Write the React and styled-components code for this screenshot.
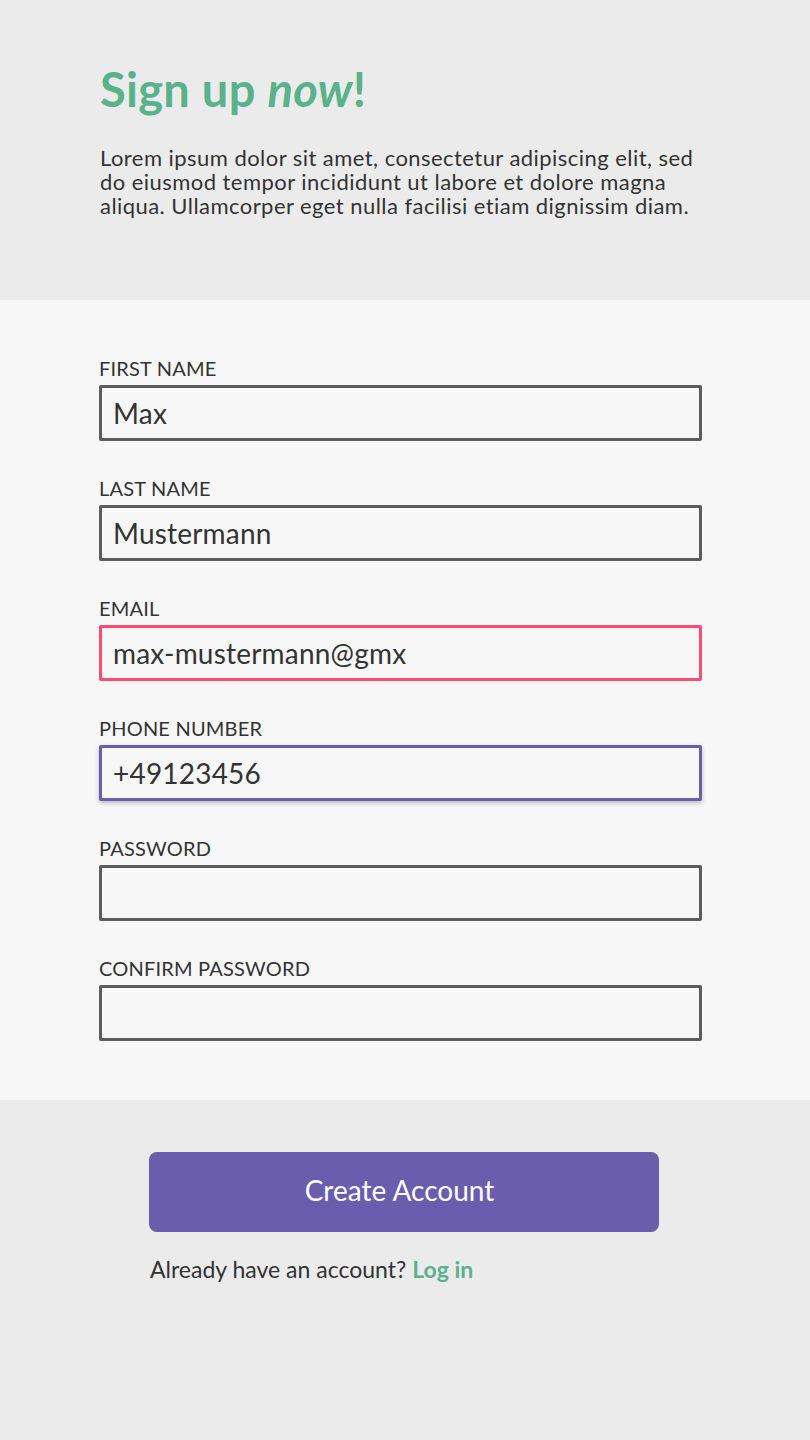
import React from "react";
import styled, { createGlobalStyle } from "styled-components";

const Global = createGlobalStyle`
  html, body { margin: 0; padding: 0; background: #ebebeb; }
  body { font-family: "Source Sans Pro", Lato, "Noto Sans", sans-serif; color: #333; }
  * { box-sizing: border-box; }
`;

const Page = styled.div`
  display: flex;
  flex-direction: column;
  min-height: 1440px;
  background: #ebebeb;
`;

const Header = styled.header`
  height: 300px;
  padding: 61px 100px 0 100px;
  background: #ebebeb;
`;

const Title = styled.h1`
  margin: 0;
  font-size: 47px;
  line-height: 56px;
  font-weight: 700;
  letter-spacing: 0.3px;
  color: #5ab28d;
  em { font-style: italic; }
`;

const Intro = styled.p`
  margin: 29px 0 0 0;
  font-size: 22px;
  line-height: 24px;
  letter-spacing: 0.45px;
  color: #333;
  width: 620px;
`;

const FormSection = styled.section`
  background: #f7f7f7;
  padding: 56px 108px 59px 99px;
  display: flex;
  flex-direction: column;
  gap: 35px;
`;

const Field = styled.label`
  display: flex;
  flex-direction: column;
  gap: 5px;
`;

const Label = styled.span`
  font-size: 20px;
  line-height: 24px;
  letter-spacing: 0.2px;
  color: #333;
  text-transform: uppercase;
`;

const borderColors = {
  normal: "#5c5c5c",
  error: "#ff4a72",
  focus: "#6a5dad",
};

const Input = styled.input`
  height: 56px;
  width: 100%;
  border: 3px solid ${(p) => borderColors[p.$state || "normal"]};
  background: #f7f7f7;
  padding: 0 11px;
  font-family: inherit;
  font-size: 28px;
  letter-spacing: 0.2px;
  color: #333;
  outline: none;
  border-radius: 2px;
  box-shadow: ${(p) => (p.$state === "focus" ? "0 2px 4px rgba(0,0,0,0.25)" : "none")};
`;

const Footer = styled.section`
  flex: 1;
  background: #ebebeb;
  padding: 52px 0 0 149px;
  display: flex;
  flex-direction: column;
  gap: 25px;
`;

const Button = styled.button`
  width: 510px;
  height: 80px;
  padding: 0 9px 4px 0;
  border: none;
  border-radius: 8px;
  background: #6a5dad;
  color: #fff;
  font-family: inherit;
  font-size: 28px;
  cursor: pointer;
`;

const LoginLine = styled.p`
  margin: 0 0 0 1px;
  font-size: 23px;
  line-height: 24px;
  color: #333;
`;

const LoginLink = styled.a`
  color: #5ab28d;
  font-weight: 700;
  text-decoration: none;
`;

const fields = [
  { label: "First Name", value: "Max" },
  { label: "Last Name", value: "Mustermann" },
  { label: "Email", value: "max-mustermann@gmx", state: "error" },
  { label: "Phone Number", value: "+49123456", state: "focus" },
  { label: "Password", value: "", type: "password" },
  { label: "Confirm Password", value: "", type: "password" },
];

export default function App() {
  return (
    <Page>
      <Global />
      <Header>
        <Title>
          Sign up <em>now</em>!
        </Title>
        <Intro>
          Lorem ipsum dolor sit amet, consectetur adipiscing elit, sed do eiusmod tempor
          incididunt ut labore et dolore magna aliqua. Ullamcorper eget nulla facilisi etiam
          dignissim diam.
        </Intro>
      </Header>
      <FormSection>
        {fields.map((f) => (
          <Field key={f.label}>
            <Label>{f.label}</Label>
            <Input type={f.type || "text"} defaultValue={f.value} $state={f.state} />
          </Field>
        ))}
      </FormSection>
      <Footer>
        <Button>Create Account</Button>
        <LoginLine>
          Already have an account? <LoginLink href="#">Log in</LoginLink>
        </LoginLine>
      </Footer>
    </Page>
  );
}
